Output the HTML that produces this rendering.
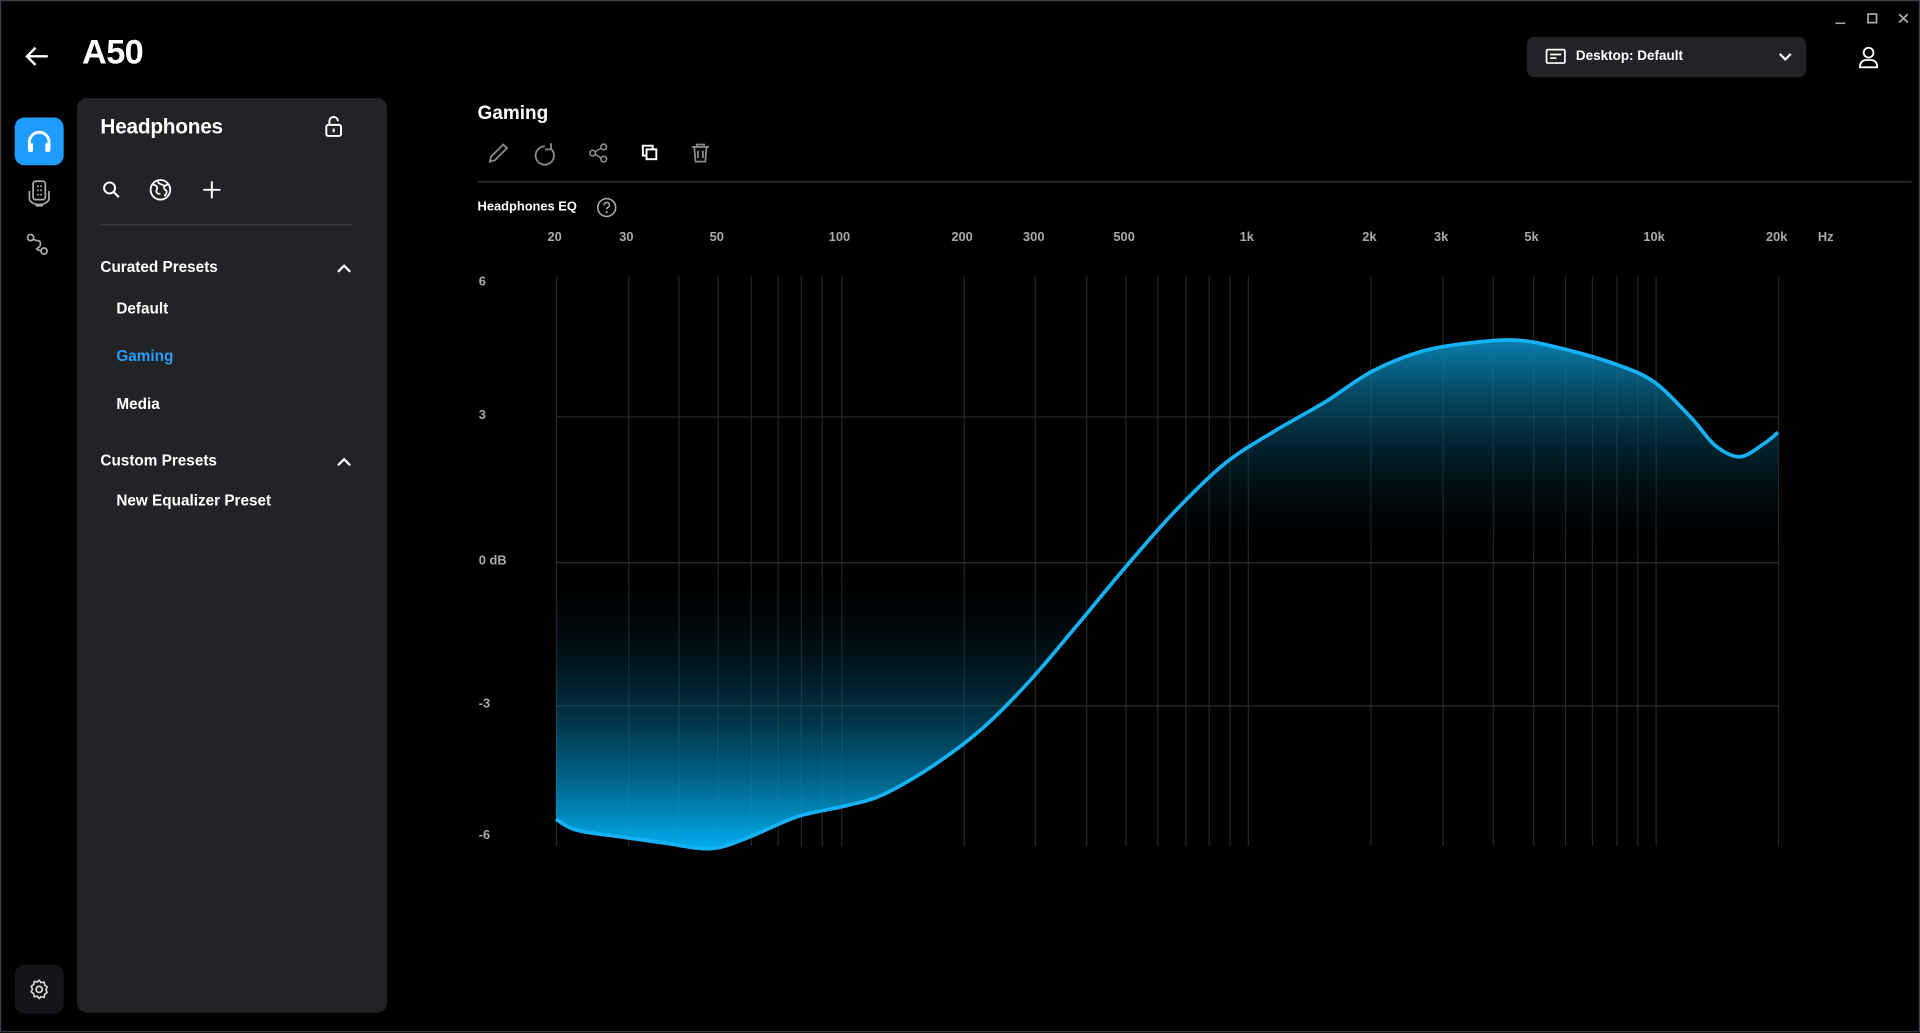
<!DOCTYPE html>
<html><head><meta charset="utf-8"><style>
html,body{margin:0;padding:0;background:#000;overflow:hidden;width:1920px;height:1032px}
#s{position:absolute;left:0;top:0;width:1568px;height:843px;transform:scale(1.22449);transform-origin:0 0;font-family:"Liberation Sans",sans-serif;color:#fff;background:#000;box-sizing:border-box;border:1px solid #3a3f4a}
.a{position:absolute}
.t{font-weight:bold;white-space:nowrap}
svg{position:absolute;overflow:visible}
</style></head><body><div id="s">
<svg style="left:18px;top:36px" width="22" height="18" viewBox="0 0 22 18"><path d="M20 9H3M10 2L3 9l7 7" stroke="#fff" stroke-width="2" fill="none"/></svg>
<div class="a t" style="left:66px;top:26px;font-size:28px;letter-spacing:-0.5px">A50</div>
<div class="a" style="left:11px;top:95px;width:40px;height:39px;background:#1e9cff;border-radius:8px"></div>
<svg style="left:11px;top:95px" width="40" height="39" viewBox="0 0 40 39"><path d="M12 26v-6a8 8 0 0 1 16 0v6" stroke="#fff" stroke-width="2.4" fill="none"/><rect x="11" y="21" width="4" height="7" rx="1" fill="#fff"/><rect x="25" y="21" width="4" height="7" rx="1" fill="#fff"/></svg>
<svg style="left:20px;top:144px" width="22" height="26" viewBox="0 0 22 26"><rect x="6" y="3" width="10" height="15" rx="2" stroke="#aaa" stroke-width="1.4" fill="none"/><path d="M3 11v6a8 5 0 0 0 16 0v-6M8 23h6" stroke="#aaa" stroke-width="1.4" fill="none"/><circle cx="10" cy="7" r=".8" fill="#aaa"/><circle cx="12.5" cy="7" r=".8" fill="#aaa"/><circle cx="10" cy="10.5" r=".8" fill="#aaa"/><circle cx="12.5" cy="10.5" r=".8" fill="#aaa"/><circle cx="10" cy="14" r=".8" fill="#aaa"/><circle cx="12.5" cy="14" r=".8" fill="#aaa"/></svg>
<svg style="left:20px;top:189px" width="22" height="22" viewBox="0 0 22 22"><circle cx="4" cy="4" r="2.5" stroke="#aaa" stroke-width="1.4" fill="none"/><circle cx="15" cy="15" r="2.5" stroke="#aaa" stroke-width="1.4" fill="none"/><path d="M6 5.5c5 2 6 0 6 4s-6 3-1 5h1.5" stroke="#aaa" stroke-width="1.4" fill="none"/></svg>
<div class="a" style="left:11px;top:787px;width:40px;height:40px;background:#141518;border-radius:8px"></div>
<svg style="left:22px;top:798px" width="18" height="18" viewBox="0 0 18 18"><circle cx="9" cy="9" r="2.5" stroke="#ddd" stroke-width="1.4" fill="none"/><path d="M9 1.5l1.5 2 2.5-.5.5 2.5 2 1.5-1 2.3 1 2.2-2 1.5-.5 2.5-2.5-.5L9 16.5l-1.5-2-2.5.5-.5-2.5-2-1.5 1-2.2-1-2.3 2-1.5.5-2.5 2.5.5z" stroke="#ddd" stroke-width="1.3" fill="none" stroke-linejoin="round"/></svg>
<div class="a" style="left:62px;top:79px;width:253px;height:747px;background:#222327;border-radius:8px"></div>
<div class="a t" style="left:81px;top:93px;font-size:17px;letter-spacing:-0.2px">Headphones</div>
<svg style="left:263px;top:93px" width="18" height="20" viewBox="0 0 18 20"><rect x="2.5" y="8" width="12" height="9" rx="1.5" stroke="#fff" stroke-width="1.6" fill="none"/><path d="M5 8V5a3.5 3.5 0 0 1 7 0" stroke="#fff" stroke-width="1.6" fill="none"/><path d="M8.5 11v3" stroke="#fff" stroke-width="1.6"/></svg>
<svg style="left:82px;top:146px" width="16" height="16" viewBox="0 0 16 16"><circle cx="6.5" cy="6.5" r="4.5" stroke="#fff" stroke-width="1.6" fill="none"/><path d="M10 10l4 4" stroke="#fff" stroke-width="1.8"/></svg>
<svg style="left:121px;top:145px" width="18" height="18" viewBox="0 0 18 18"><circle cx="9" cy="9" r="8" stroke="#fff" stroke-width="1.5" fill="none"/><path d="M3 5c3 0 4 2 3 4s1 4 3 3M15 5c-3 0-4 3-2 4s1 4-1 5M7 2c0 3 4 2 5 4" stroke="#fff" stroke-width="1.4" fill="none"/></svg>
<svg style="left:164px;top:146px" width="16" height="16" viewBox="0 0 16 16"><path d="M8 1v14M1 8h14" stroke="#fff" stroke-width="1.6"/></svg>
<div class="a" style="left:81px;top:182px;width:206px;height:1px;background:#3a3b40"></div>
<div class="a t" style="left:81px;top:210px;font-size:12.5px">Curated Presets</div>
<svg style="left:273px;top:213px" width="14" height="10" viewBox="0 0 14 10"><path d="M2 8l5-5 5 5" stroke="#fff" stroke-width="1.8" fill="none"/></svg>
<div class="a t" style="left:94px;top:244px;font-size:12.5px">Default</div>
<div class="a t" style="left:94px;top:283px;font-size:12.5px;color:#2a9df4">Gaming</div>
<div class="a t" style="left:94px;top:322px;font-size:12.5px">Media</div>
<div class="a t" style="left:81px;top:368px;font-size:12.5px">Custom Presets</div>
<svg style="left:273px;top:371px" width="14" height="10" viewBox="0 0 14 10"><path d="M2 8l5-5 5 5" stroke="#fff" stroke-width="1.8" fill="none"/></svg>
<div class="a t" style="left:94px;top:401px;font-size:12.5px">New Equalizer Preset</div>
<div class="a" style="left:1246px;top:29px;width:228px;height:33px;background:#222327;border-radius:6px"></div>
<svg style="left:1261px;top:38px" width="18" height="15" viewBox="0 0 18 15"><rect x="1" y="1.5" width="15" height="11" rx="1" stroke="#fff" stroke-width="1.4" fill="none"/><path d="M4 5.5h9M4 8.5h5" stroke="#fff" stroke-width="1.4"/></svg>
<div class="a t" style="left:1286px;top:39px;font-size:11px">Desktop: Default</div>
<svg style="left:1451px;top:41px" width="12" height="9" viewBox="0 0 12 9"><path d="M1.5 2l4.5 4.5L10.5 2" stroke="#fff" stroke-width="1.8" fill="none"/></svg>
<svg style="left:1516px;top:36px" width="18" height="19" viewBox="0 0 18 19"><circle cx="9" cy="6" r="4" stroke="#fff" stroke-width="1.5" fill="none"/><path d="M2 18v-1a5 5 0 0 1 5-5h4a5 5 0 0 1 5 5v1z" stroke="#fff" stroke-width="1.5" fill="none"/></svg>
<svg style="left:1497px;top:8px" width="65" height="14" viewBox="0 0 65 14"><path d="M1 10h8" stroke="#aaa" stroke-width="1.3"/><rect x="27.5" y="2.5" width="7" height="7" stroke="#aaa" stroke-width="1.4" fill="none"/><path d="M53 2.5l7 7M60 2.5l-7 7" stroke="#aaa" stroke-width="1.4"/></svg>
<div class="a t" style="left:389px;top:83px;font-size:15.5px">Gaming</div>
<svg style="left:396px;top:114px" width="190" height="20" viewBox="0 0 190 20"><path d="M3 17l1-4L14 3l3 3L7 16z" stroke="#888" stroke-width="1.5" fill="none"/><path d="M48 4.5a7.5 7.5 0 1 0 5 2M53 2v5h-5" stroke="#888" stroke-width="1.5" fill="none"/><circle cx="87" cy="10" r="2.3" stroke="#888" stroke-width="1.4" fill="none"/><circle cx="96" cy="5" r="2.3" stroke="#888" stroke-width="1.4" fill="none"/><circle cx="96" cy="15" r="2.3" stroke="#888" stroke-width="1.4" fill="none"/><path d="M89 9l5-3M89 11l5 3" stroke="#888" stroke-width="1.3"/><rect x="128" y="4" width="8" height="8" stroke="#fff" stroke-width="1.6" fill="none"/><rect x="131" y="7" width="8" height="8" stroke="#fff" stroke-width="1.6" fill="#000"/><path d="M168 5h14M172 5V3h6v2M170 5l1 12h8l1-12M173 8v6M177 8v6" stroke="#888" stroke-width="1.5" fill="none"/></svg>
<div class="a" style="left:389px;top:147px;width:1171px;height:1px;background:#3a3a3a"></div>
<div class="a t" style="left:389px;top:162px;font-size:10.5px">Headphones EQ</div>
<svg style="left:486px;top:160px" width="17" height="17" viewBox="0 0 17 17"><circle cx="8.5" cy="8.5" r="7.3" stroke="#aaa" stroke-width="1.3" fill="none"/><path d="M6.3 6.5a2.2 2.2 0 1 1 2.8 2.1c-.6.2-.6.6-.6 1.4" stroke="#aaa" stroke-width="1.3" fill="none"/><circle cx="8.5" cy="12.3" r=".9" fill="#aaa"/></svg>
<svg style="left:0;top:0" width="1568" height="843" viewBox="0 0 1568 843">
<defs><linearGradient id="g" gradientUnits="userSpaceOnUse" x1="0" y1="277" x2="0" y2="692"><stop offset="0" stop-color="#0a86b8" stop-opacity=".95"/><stop offset=".436" stop-color="#000" stop-opacity="0"/><stop offset="1" stop-color="#00aeef"/></linearGradient></defs>
<g stroke="#262626" stroke-width="1" id="vg"></g>
<g stroke="#2e2e2e"><path d="M453 339.5H1451M453 458.5H1451M453 575.5H1451"/></g>
<path id="fl" fill="url(#g)" d=""/>
<path id="cv" fill="none" stroke="#16b2f5" stroke-width="3" d=""/>
<g fill="#aaa" font-family="Liberation Sans,sans-serif" font-size="10.5" font-weight="bold" id="lb">
<text x="390" y="232">6</text><text x="390" y="341">3</text><text x="390" y="460">0 dB</text><text x="390" y="577">-3</text><text x="390" y="684">-6</text>
<text x="1490" y="196" text-anchor="middle">Hz</text></g>
</svg>
<script>
var X0=453,W=998;function fx(f){return X0+Math.log10(f/20)/3*W}
var vg=document.getElementById('vg'),s='';
[20,30,40,50,60,70,80,90,100,200,300,400,500,600,700,800,900,1000,2000,3000,4000,5000,6000,7000,8000,9000,10000,20000].forEach(function(f){var x=Math.round(fx(f))+.5;s+='<path d="M'+x+' 225V690"/>'});
vg.innerHTML=s;
var lb=document.getElementById('lb'),t='';
[[20,'20'],[30,'30'],[50,'50'],[100,'100'],[200,'200'],[300,'300'],[500,'500'],[1000,'1k'],[2000,'2k'],[3000,'3k'],[5000,'5k'],[10000,'10k'],[20000,'20k']].forEach(function(a){t+='<text x="'+(fx(a[0])-1)+'" y="196" text-anchor="middle">'+a[1]+'</text>'});
lb.innerHTML+=t;
var p=[[453,668],[470,677],[510,683],[545,688],[580,692],[610,683],[650,666],[690,657],[720,648],[760,625],[800,595],[840,555],[880,508],[920,460],[960,415],[1000,377],[1040,351],[1080,328],[1120,302],[1160,286],[1200,279],[1240,277],[1280,285],[1320,297],[1350,311],[1380,340],[1400,363],[1420,372],[1440,361],[1451,352]];
function cr(pts){var d='M'+pts[0][0]+' '+pts[0][1];for(var i=0;i<pts.length-1;i++){var p0=pts[i-1]||pts[i],p1=pts[i],p2=pts[i+1],p3=pts[i+2]||p2;d+=' C'+(p1[0]+(p2[0]-p0[0])/6)+' '+(p1[1]+(p2[1]-p0[1])/6)+' '+(p2[0]-(p3[0]-p1[0])/6)+' '+(p2[1]-(p3[1]-p1[1])/6)+' '+p2[0]+' '+p2[1]}return d}
var d=cr(p);document.getElementById('cv').setAttribute('d',d);
document.getElementById('fl').setAttribute('d',d+' L1451 458 L453 458Z');
</script>
</div></body></html>
